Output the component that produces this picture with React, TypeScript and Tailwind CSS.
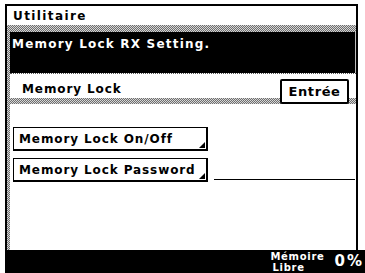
import React from 'react';

const dither =
  'bg-[#a0a0a0] bg-[image:repeating-conic-gradient(#6e6e6e_0_25%,#d6d6d6_0_50%)] bg-[length:2px_2px]';

const font = "font-['DejaVu_Sans',sans-serif] font-bold";

const Corner: React.FC = () => (
  <svg className="absolute right-[1px] bottom-[1px]" width="6" height="6" viewBox="0 0 6 6">
    <polygon points="6,0 6,6 0,6" fill="#000" />
  </svg>
);

const MenuButton: React.FC<{ label: string }> = ({ label }) => (
  <button className="relative h-[24px] w-[195px] border border-black border-b-2 border-r-2 bg-white text-left pl-[5px] text-[12px] tracking-[0.9px] leading-none">
    {label}
    <Corner />
  </button>
);

const App: React.FC = () => {
  return (
    <div className={`w-[365px] h-[273px] bg-white overflow-hidden flex flex-col text-black ${font}`}>
      <div className="pt-[4px] pl-[5px] pr-[7px]">
        <div className="h-[246px] border-x-2 border-t-2 border-black flex flex-col">
          {/* title */}
          <div className="h-[19px] bg-white pl-[6px] flex items-center text-[12px] tracking-[1.4px]">
            Utilitaire
          </div>

          <div className={`flex-1 flex flex-col pl-[3px] pt-[7px] ${dither}`}>
            {/* message box */}
            <div className="h-[41px] bg-black text-white border-r border-[#bbbbbb] pl-[2px] pt-[6px] text-[12px] tracking-[1.2px] leading-none">
              Memory Lock RX Setting.
            </div>

            {/* header row */}
            <div className="h-[25px] bg-white flex items-start justify-between border-t border-dotted border-[#555]">
              <span className="pl-[12px] pt-[9px] text-[12px] tracking-[0.9px] leading-none">Memory Lock</span>
              <button className="relative z-10 mt-[5px] mr-[7px] h-[25px] w-[69px] border-2 border-black rounded-[2px] bg-white text-[13px] tracking-[0.6px] leading-none">
                Entrée
              </button>
            </div>
            <div className={`h-[6px] ${dither}`} />

            {/* body */}
            <div className="flex-1 bg-white pt-[23px] pl-[3px] flex flex-col gap-[7px]">
              <MenuButton label="Memory Lock On/Off" />
              <div className="flex items-end gap-[6px]">
                <MenuButton label="Memory Lock Password" />
                <div className="h-[1px] w-[141px] bg-black mb-[2px]" />
              </div>
            </div>
          </div>
        </div>
      </div>

      {/* status bar */}
      <div className="ml-[5px] flex-1 bg-black text-white flex items-start justify-end">
        <div className="mt-[1px] mr-[10px] text-[10px] leading-[11px] tracking-[0.7px]">
          <div>Mémoire</div>
          <div className="pl-[2px]">Libre</div>
        </div>
        <div className="mt-[4px] mr-[1px] text-[15px] leading-none tracking-[2px]">0%</div>
      </div>
    </div>
  );
};

export default App;
